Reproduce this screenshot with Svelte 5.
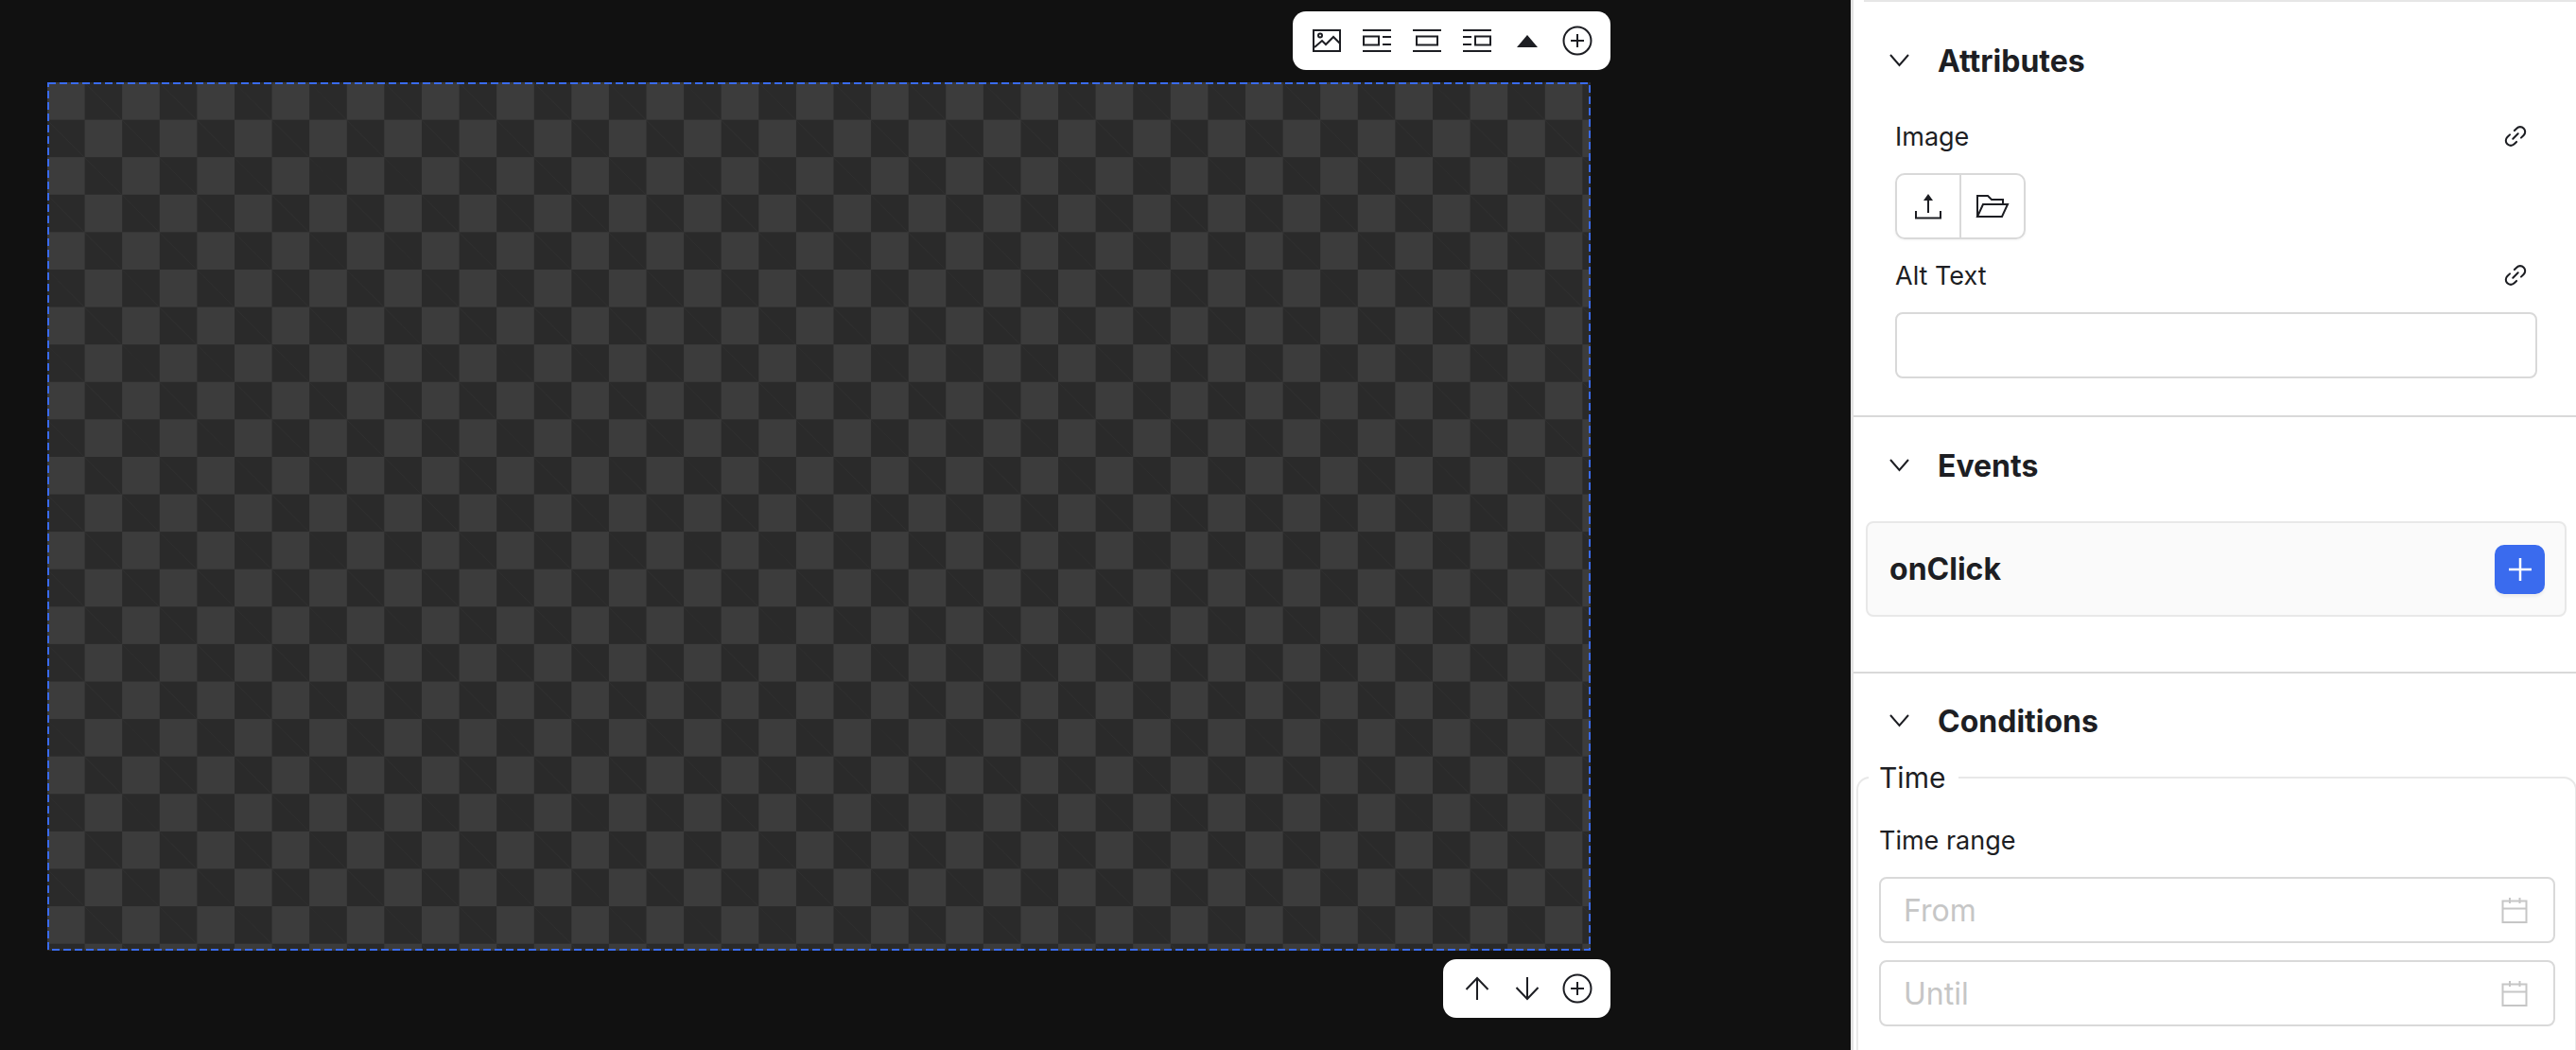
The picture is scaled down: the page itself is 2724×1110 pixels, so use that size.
<script>
	const sections = { attributes: 'Attributes', events: 'Events', conditions: 'Conditions' };
</script>

{#snippet chevron()}
	<svg class="chevron" width="21" height="14" viewBox="0 0 21 14" fill="none" stroke="currentColor" stroke-width="2"><path d="M1 1l9.5 11L20 1"/></svg>
{/snippet}

{#snippet plusCircle()}
	<svg width="32" height="32" viewBox="0 0 32 32" fill="none" stroke="currentColor" stroke-width="2"><circle cx="16" cy="16" r="14.5"/><path d="M16 9v14M9 16h14"/></svg>
{/snippet}

{#snippet link()}
	<svg class="link" width="26" height="26" viewBox="0 0 24 24" fill="none" stroke="currentColor" stroke-width="1.900" stroke-linecap="round"><path d="M11 6.500l2.200-2.200a4.800 4.800 0 0 1 6.800 6.800L17.500 13.500"/><path d="M13 17.500l-2.200 2.200a4.800 4.800 0 0 1-6.800-6.800L6.500 10.500"/><path d="M9.500 14.500l5-5"/></svg>
{/snippet}

{#snippet calendar()}
	<svg width="28" height="28" viewBox="0 0 28 28" fill="none" stroke="#c6c6c6" stroke-width="2"><path d="M1.500 4.500h25v22.500h-25zM1.500 12.500h25M9 1v6M19.500 1v6"/></svg>
{/snippet}

<div class="page">
	<main class="stage">
		<div class="toolbar">
			<button aria-label="Image">
				<svg width="32" height="26" viewBox="0 0 32 26" fill="none" stroke="currentColor" stroke-width="2"><rect x="2" y="2" width="28" height="22"/><circle cx="9" cy="7.500" r="2"/><path d="M3 20l8-7 4 4 8-8 7 7"/></svg>
			</button>
			<button aria-label="Align left">
				<svg width="32" height="26" viewBox="0 0 32 26" fill="none" stroke="currentColor" stroke-width="2"><path d="M1 2h30M1 24h30M22 9h9M22 17h9"/><rect x="2" y="8.500" width="16" height="9"/></svg>
			</button>
			<button aria-label="Align center">
				<svg width="32" height="26" viewBox="0 0 32 26" fill="none" stroke="currentColor" stroke-width="2"><path d="M1 2h30M1 24h30"/><rect x="5" y="8.500" width="22" height="9"/></svg>
			</button>
			<button aria-label="Align right">
				<svg width="32" height="26" viewBox="0 0 32 26" fill="none" stroke="currentColor" stroke-width="2"><path d="M1 2h30M1 24h30M1 9h9M1 17h9"/><rect x="14" y="8.500" width="16" height="9"/></svg>
			</button>
			<button aria-label="Collapse">
				<svg width="24" height="14" viewBox="0 0 24 14" fill="currentColor"><path d="M1 14L12 1l11 13z"/></svg>
			</button>
			<button aria-label="Add">{@render plusCircle()}</button>
		</div>

		<div class="canvas">
			<svg class="outline" width="1632" height="918"><rect x="1" y="1" width="1630" height="916" fill="none" stroke="#3a6bee" stroke-width="2" stroke-dasharray="8 4"/></svg>
		</div>

		<div class="toolbar">
			<button aria-label="Move up">
				<svg width="26" height="26" viewBox="0 0 26 26" fill="none" stroke="currentColor" stroke-width="2"><path d="M13 25V2M1.500 14L13 2l11.500 12"/></svg>
			</button>
			<button aria-label="Move down">
				<svg width="26" height="26" viewBox="0 0 26 26" fill="none" stroke="currentColor" stroke-width="2"><path d="M13 1v23M1.500 12L13 24l11.500-12"/></svg>
			</button>
			<button aria-label="Add">{@render plusCircle()}</button>
		</div>
	</main>

	<aside class="panel">
		<section class="attributes">
			<header class="head">{@render chevron()}<h2>{sections.attributes}</h2></header>
			<div class="label-row"><span>Image</span>{@render link()}</div>
			<div class="file-buttons">
				<button aria-label="Upload">
					<svg width="30" height="28" viewBox="0 0 30 28" fill="none" stroke="currentColor" stroke-width="2"><path d="M2 19v7.500h26V19"/><path d="M15 21V4"/><path d="M15 1l5 7H10z" fill="currentColor" stroke="none"/></svg>
				</button>
				<button aria-label="Browse">
					<svg width="36" height="26" viewBox="0 0 36 26" fill="none" stroke="currentColor" stroke-width="2"><path d="M2 24V2h11l4 4h12v5"/><path d="M2 24l6-13h26l-6 13z"/></svg>
				</button>
			</div>
			<div class="label-row alt"><span>Alt Text</span>{@render link()}</div>
			<input class="text-input" type="text" aria-label="Alt Text" />
		</section>

		<section class="events">
			<header class="head">{@render chevron()}<h2>{sections.events}</h2></header>
			<div class="event-row">
				<strong>onClick</strong>
				<button class="add" aria-label="Add event">
					<svg width="24" height="24" viewBox="0 0 24 24" fill="none" stroke="#fff" stroke-width="2.500"><path d="M12 0v24M0 12h24"/></svg>
				</button>
			</div>
		</section>

		<section class="conditions">
			<header class="head">{@render chevron()}<h2>{sections.conditions}</h2></header>
			<fieldset>
				<legend>Time</legend>
				<div class="label-row"><span>Time range</span></div>
				<div class="date-field"><input type="text" placeholder="From" />{@render calendar()}</div>
				<div class="date-field"><input type="text" placeholder="Until" />{@render calendar()}</div>
			</fieldset>
		</section>
	</aside>
</div>

<style>
	:global(body) {
		margin: 0;
		background: #111111;
		overflow: hidden;
	}
	.page {
		display: flex;
		height: 1110px;
		overflow: hidden;
		font-family: Inter, "Liberation Sans", sans-serif;
		color: #1d1e23;
	}
	button {
		border: 0;
		background: none;
		padding: 0;
		color: inherit;
		display: flex;
		align-items: center;
		justify-content: center;
	}

	/* canvas side */
	.stage {
		width: 1653px;
		padding: 12px 0 0 50px;
		margin-right: 254px;
		display: flex;
		flex-direction: column;
		align-items: flex-end;
		flex-shrink: 0;
	}
	.toolbar {
		display: flex;
		height: 62px;
		padding: 0 9px;
		background: #ffffff;
		border-radius: 14px;
	}
	.toolbar button {
		width: 53px;
	}
	.canvas {
		position: relative;
		align-self: flex-start;
		width: 1632px;
		height: 918px;
		margin: 13px 0 9px;
		background-color: #3c3c3c;
		background-image:
			linear-gradient(45deg, #2a2a2a 25%, transparent 25%, transparent 75%, #2a2a2a 75%),
			linear-gradient(45deg, #2a2a2a 25%, transparent 25%, transparent 75%, #2a2a2a 75%);
		background-size: 79.200px 79.200px;
		background-position: 0 0, 39.600px 39.600px;
	}
	.outline {
		position: absolute;
		inset: 0;
		display: block;
	}

	/* right panel */
	.panel {
		flex: 1;
		min-width: 0;
		height: 1110px;
		overflow: hidden;
		background: #ffffff;
		border-left: 3px solid #e2e2e2;
	}
	section {
		padding: 0 41px 0 44px;
		border-bottom: 2px solid #d9d9d9;
	}
	.attributes {
		position: relative;
		padding-top: 41px;
		padding-bottom: 39px;
	}
	.attributes::before {
		content: "";
		position: absolute;
		top: 0;
		left: 11px;
		right: 0;
		height: 2px;
		background: #e6e6e6;
	}
	.events {
		padding-top: 28px;
		padding-bottom: 58px;
	}
	.conditions {
		padding-top: 27px;
		border-bottom: 0;
	}
	.head {
		display: flex;
		align-items: center;
		gap: 30px;
		height: 46px;
		margin-left: -6px;
	}
	.chevron {
		flex-shrink: 0;
	}
	h2 {
		margin: 1px 0 0;
		font-size: 32px;
		font-weight: 650;
		line-height: 46px;
	}
	.label-row {
		display: flex;
		align-items: center;
		justify-content: space-between;
		height: 40px;
		font-size: 27px;
		font-weight: 400;
	}
	.attributes .label-row {
		margin-top: 37px;
		padding-right: 10px;
	}
	.attributes .label-row.alt {
		margin-top: 18px;
	}
	.file-buttons {
		display: flex;
		width: 138px;
		height: 70px;
		margin-top: 19px;
		box-sizing: border-box;
		border: 2px solid #d9d9d9;
		border-radius: 10px;
		box-shadow: 0 1px 3px rgba(0, 0, 0, 0.05);
	}
	.file-buttons button {
		flex: 1;
	}
	.file-buttons button + button {
		border-left: 2px solid #d9d9d9;
	}
	input {
		font-family: inherit;
		font-size: 32px;
		color: inherit;
		border: 0;
		outline: 0;
		background: transparent;
		padding: 0;
		min-width: 0;
	}
	input::placeholder {
		color: #c6c6c6;
		opacity: 1;
	}
	.text-input {
		display: block;
		box-sizing: border-box;
		width: 100%;
		height: 70px;
		margin-top: 19px;
		border: 2px solid #d9d9d9;
		border-radius: 8px;
	}
	.event-row {
		display: flex;
		align-items: center;
		justify-content: space-between;
		box-sizing: border-box;
		height: 101px;
		margin: 36px -31px 0 -31px;
		padding: 0 21px 0 23px;
		background: #fafafa;
		border: 2px solid #e8e8e8;
		border-radius: 8px;
	}
	strong {
		font-size: 32px;
		font-weight: 650;
		margin-top: -1px;
	}
	.add {
		width: 53px;
		height: 52px;
		background: #3a6bee;
		border-radius: 10px;
		box-shadow: 0 3px 3px rgba(0, 0, 0, 0.05);
	}
	fieldset {
		margin: 17px -42px 0 -41px;
		padding: 0 21px 40px 22px;
		border: 2px solid #e8e8e8;
		border-radius: 14px;
		min-width: 0;
	}
	legend {
		margin-left: -11px;
		padding: 0 14px 0 11px;
		font-size: 30px;
		line-height: 40px;
	}
	fieldset .label-row {
		margin-top: 26px;
	}
	.date-field {
		display: flex;
		align-items: center;
		box-sizing: border-box;
		height: 70px;
		margin-top: 18px;
		padding: 0 27px 0 24px;
		border: 2px solid #d9d9d9;
		border-radius: 8px;
	}
	.date-field input {
		flex: 1;
	}
	fieldset .label-row + .date-field {
		margin-top: 19px;
	}
</style>
